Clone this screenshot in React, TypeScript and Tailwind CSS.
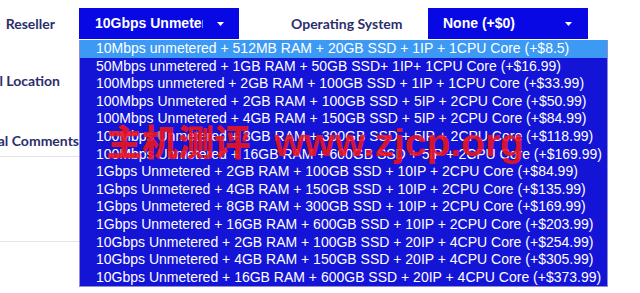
const packages = [
  '10Mbps unmetered + 512MB RAM + 20GB SSD + 1IP + 1CPU Core (+$8.5)',
  '50Mbps unmetered + 1GB RAM + 50GB SSD+ 1IP+ 1CPU Core (+$16.99)',
  '100Mbps unmetered + 2GB RAM + 100GB SSD + 1IP + 1CPU Core (+$33.99)',
  '100Mbps Unmetered + 2GB RAM + 100GB SSD + 5IP + 2CPU Core (+$50.99)',
  '100Mbps Unmetered + 4GB RAM + 150GB SSD + 5IP + 2CPU Core (+$84.99)',
  '100Mbps Unmetered + 8GB RAM + 300GB SSD + 5IP + 2CPU Core (+$118.99)',
  '100Mbps Unmetered + 16GB RAM + 600GB SSD + 5IP + 2CPU Core (+$169.99)',
  '1Gbps Unmetered + 2GB RAM + 100GB SSD + 10IP + 2CPU Core (+$84.99)',
  '1Gbps Unmetered + 4GB RAM + 150GB SSD + 10IP + 2CPU Core (+$135.99)',
  '1Gbps Unmetered + 8GB RAM + 300GB SSD + 10IP + 2CPU Core (+$169.99)',
  '1Gbps Unmetered + 16GB RAM + 600GB SSD + 10IP + 2CPU Core (+$203.99)',
  '10Gbps Unmetered + 2GB RAM + 100GB SSD + 20IP + 4CPU Core (+$254.99)',
  '10Gbps Unmetered + 4GB RAM + 150GB SSD + 20IP + 4CPU Core (+$305.99)',
  '10Gbps Unmetered + 16GB RAM + 600GB SSD + 20IP + 4CPU Core (+$373.99)',
]

function Caret() {
  return (
    <svg width="7" height="4" viewBox="0 0 7 4" className="shrink-0">
      <path d="M0 0 L7 0 L3.5 4 Z" fill="white" />
    </svg>
  )
}

function Label({ text, pr }: { text: string; pr: string }) {
  return (
    <div className={`h-[31px] flex items-center justify-end overflow-hidden whitespace-nowrap ${pr}`}>
      <span className="text-[14px] font-bold text-[#2b2e6c]">{text}</span>
    </div>
  )
}

function App() {
  return (
    <div
      className="relative w-[640px] h-[293px] bg-white overflow-hidden"
      style={{ fontFamily: '"Liberation Sans", Arial, sans-serif' }}
    >
      <div className="flex pt-[8px]">
        {/* labels column */}
        <div className="w-[79px] shrink-0 flex flex-col" style={{ fontFamily: 'Lato, sans-serif' }}>
          <Label text="Reseller" pr="pr-[24px]" />
          <div className="mt-[26px]">
            <Label text="Additional Location" pr="pr-[19px]" />
          </div>
          <div className="mt-[29px] border-b border-[#e3e3e3] w-[300px] -mr-[221px]">
            <div className="w-[79px]">
              <Label text="Additional Comments" pr="pr-0" />
            </div>
          </div>
          <div className="h-[85px] border-b border-[#e3e3e3] w-[300px]" />
        </div>

        {/* selects row */}
        <div className="flex items-start">
          <div className="w-[160px] h-[31px] bg-[#0808e4] flex items-center pl-[16px] pr-[15px]">
            <span className="w-[108px] overflow-hidden whitespace-nowrap text-white font-bold text-[14px]">
              10Gbps Unmetered + 16GB RAM
            </span>
            <div className="flex-1" />
            <Caret />
          </div>
          <div
            className="w-[189px] h-[31px] flex items-center pl-[52px] whitespace-nowrap text-[14px] font-bold text-[#2b2e6c]"
            style={{ fontFamily: 'Lato, sans-serif' }}
          >
            Operating System
          </div>
          <div className="w-[160px] h-[31px] bg-[#0808e4] flex items-center pl-[15px] pr-[16px]">
            <span className="text-white font-bold text-[14px] whitespace-nowrap">None (+$0)</span>
            <div className="flex-1" />
            <Caret />
          </div>
        </div>
      </div>

      {/* open dropdown list */}
      <ul className="absolute left-[79px] top-[40px] w-[529px] bg-[#1414d6] border border-[#8d8dd8] border-t-0">
        {packages.map((p, i) => (
          <li
            key={p}
            className={`h-[17.6px] leading-[17.6px] pl-[16px] text-[14px] text-white whitespace-nowrap ${
              i === 0 ? 'bg-[#3c9af4]' : ''
            }`}
          >
            {p}
          </li>
        ))}
      </ul>

      {/* watermark */}
      <div className="absolute left-[106px] top-[122px] flex items-baseline gap-[24px] text-[#ea1520] opacity-90 pointer-events-none">
        <span
          className="text-[36px] font-black leading-none"
          style={{ fontFamily: '"Noto Sans CJK SC", sans-serif' }}
        >
          主机测评
        </span>
        <span className="text-[39px] font-bold leading-none" style={{ fontFamily: '"Liberation Sans", sans-serif' }}>
          www.zjcp.org
        </span>
      </div>
    </div>
  )
}

export default App
